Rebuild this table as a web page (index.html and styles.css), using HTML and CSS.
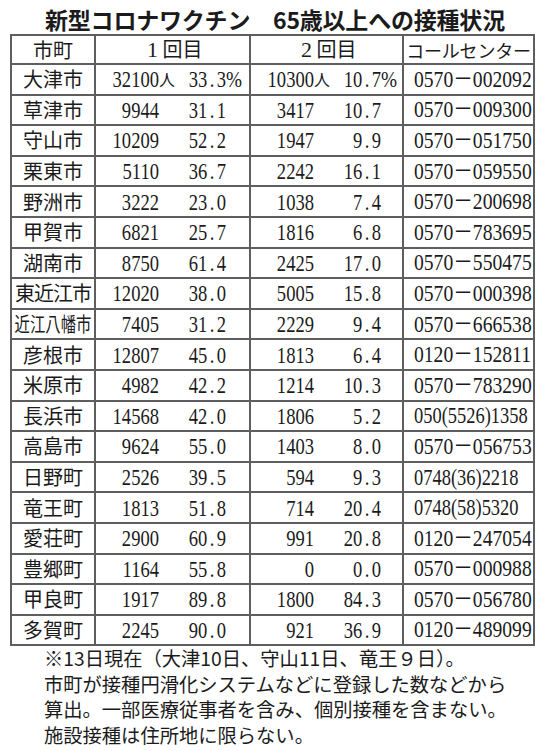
FILE: index.html
```html
<!DOCTYPE html>
<html lang="ja">
<head>
<meta charset="utf-8">
<title>新型コロナワクチン 65歳以上への接種状況</title>
<link rel="stylesheet" href="styles.css">
</head>
<body>
<div class="page">
  <h1 class="title">新型コロナワクチン　65歳以上への接種状況</h1>
  <table class="tbl">
    <colgroup><col class="c1"><col class="c2"><col class="c3"><col class="c4"></colgroup>
    <thead>
      <tr class="head"><th>市町</th><th><span class="fw">1</span>回目</th><th><span class="fw">2</span>回目</th><th class="callh">コールセンター</th></tr>
    </thead>
    <tbody>
      <tr><td class="city">大津市</td><td class="val"><div class="vf"><span class="n">32100</span><span class="u">人</span><span class="p">33<span class="d">.</span>3</span><span class="u2">%</span></div></td><td class="val"><div class="vf"><span class="n">10300</span><span class="u">人</span><span class="p">10<span class="d">.</span>7</span><span class="u2">%</span></div></td><td class="tel"><span class="t">0570－002092</span></td></tr>
      <tr><td class="city">草津市</td><td class="val"><div class="vf"><span class="n">9944</span><span class="u"></span><span class="p">31<span class="d">.</span>1</span><span class="u2"></span></div></td><td class="val"><div class="vf"><span class="n">3417</span><span class="u"></span><span class="p">10<span class="d">.</span>7</span><span class="u2"></span></div></td><td class="tel"><span class="t">0570－009300</span></td></tr>
      <tr><td class="city">守山市</td><td class="val"><div class="vf"><span class="n">10209</span><span class="u"></span><span class="p">52<span class="d">.</span>2</span><span class="u2"></span></div></td><td class="val"><div class="vf"><span class="n">1947</span><span class="u"></span><span class="p">9<span class="d">.</span>9</span><span class="u2"></span></div></td><td class="tel"><span class="t">0570－051750</span></td></tr>
      <tr><td class="city">栗東市</td><td class="val"><div class="vf"><span class="n">5110</span><span class="u"></span><span class="p">36<span class="d">.</span>7</span><span class="u2"></span></div></td><td class="val"><div class="vf"><span class="n">2242</span><span class="u"></span><span class="p">16<span class="d">.</span>1</span><span class="u2"></span></div></td><td class="tel"><span class="t">0570－059550</span></td></tr>
      <tr><td class="city">野洲市</td><td class="val"><div class="vf"><span class="n">3222</span><span class="u"></span><span class="p">23<span class="d">.</span>0</span><span class="u2"></span></div></td><td class="val"><div class="vf"><span class="n">1038</span><span class="u"></span><span class="p">7<span class="d">.</span>4</span><span class="u2"></span></div></td><td class="tel"><span class="t">0570－200698</span></td></tr>
      <tr><td class="city">甲賀市</td><td class="val"><div class="vf"><span class="n">6821</span><span class="u"></span><span class="p">25<span class="d">.</span>7</span><span class="u2"></span></div></td><td class="val"><div class="vf"><span class="n">1816</span><span class="u"></span><span class="p">6<span class="d">.</span>8</span><span class="u2"></span></div></td><td class="tel"><span class="t">0570－783695</span></td></tr>
      <tr><td class="city">湖南市</td><td class="val"><div class="vf"><span class="n">8750</span><span class="u"></span><span class="p">61<span class="d">.</span>4</span><span class="u2"></span></div></td><td class="val"><div class="vf"><span class="n">2425</span><span class="u"></span><span class="p">17<span class="d">.</span>0</span><span class="u2"></span></div></td><td class="tel"><span class="t">0570－550475</span></td></tr>
      <tr><td class="city"><span class="cond4">東近江市</span></td><td class="val"><div class="vf"><span class="n">12020</span><span class="u"></span><span class="p">38<span class="d">.</span>0</span><span class="u2"></span></div></td><td class="val"><div class="vf"><span class="n">5005</span><span class="u"></span><span class="p">15<span class="d">.</span>8</span><span class="u2"></span></div></td><td class="tel"><span class="t">0570－000398</span></td></tr>
      <tr><td class="city"><span class="cond5">近江八幡市</span></td><td class="val"><div class="vf"><span class="n">7405</span><span class="u"></span><span class="p">31<span class="d">.</span>2</span><span class="u2"></span></div></td><td class="val"><div class="vf"><span class="n">2229</span><span class="u"></span><span class="p">9<span class="d">.</span>4</span><span class="u2"></span></div></td><td class="tel"><span class="t">0570－666538</span></td></tr>
      <tr><td class="city">彦根市</td><td class="val"><div class="vf"><span class="n">12807</span><span class="u"></span><span class="p">45<span class="d">.</span>0</span><span class="u2"></span></div></td><td class="val"><div class="vf"><span class="n">1813</span><span class="u"></span><span class="p">6<span class="d">.</span>4</span><span class="u2"></span></div></td><td class="tel"><span class="t">0120－152811</span></td></tr>
      <tr><td class="city">米原市</td><td class="val"><div class="vf"><span class="n">4982</span><span class="u"></span><span class="p">42<span class="d">.</span>2</span><span class="u2"></span></div></td><td class="val"><div class="vf"><span class="n">1214</span><span class="u"></span><span class="p">10<span class="d">.</span>3</span><span class="u2"></span></div></td><td class="tel"><span class="t">0570－783290</span></td></tr>
      <tr><td class="city">長浜市</td><td class="val"><div class="vf"><span class="n">14568</span><span class="u"></span><span class="p">42<span class="d">.</span>0</span><span class="u2"></span></div></td><td class="val"><div class="vf"><span class="n">1806</span><span class="u"></span><span class="p">5<span class="d">.</span>2</span><span class="u2"></span></div></td><td class="tel"><span class="t tp">050(5526)1358</span></td></tr>
      <tr><td class="city">高島市</td><td class="val"><div class="vf"><span class="n">9624</span><span class="u"></span><span class="p">55<span class="d">.</span>0</span><span class="u2"></span></div></td><td class="val"><div class="vf"><span class="n">1403</span><span class="u"></span><span class="p">8<span class="d">.</span>0</span><span class="u2"></span></div></td><td class="tel"><span class="t">0570－056753</span></td></tr>
      <tr><td class="city">日野町</td><td class="val"><div class="vf"><span class="n">2526</span><span class="u"></span><span class="p">39<span class="d">.</span>5</span><span class="u2"></span></div></td><td class="val"><div class="vf"><span class="n">594</span><span class="u"></span><span class="p">9<span class="d">.</span>3</span><span class="u2"></span></div></td><td class="tel"><span class="t tp">0748(36)2218</span></td></tr>
      <tr><td class="city">竜王町</td><td class="val"><div class="vf"><span class="n">1813</span><span class="u"></span><span class="p">51<span class="d">.</span>8</span><span class="u2"></span></div></td><td class="val"><div class="vf"><span class="n">714</span><span class="u"></span><span class="p">20<span class="d">.</span>4</span><span class="u2"></span></div></td><td class="tel"><span class="t tp">0748(58)5320</span></td></tr>
      <tr><td class="city">愛荘町</td><td class="val"><div class="vf"><span class="n">2900</span><span class="u"></span><span class="p">60<span class="d">.</span>9</span><span class="u2"></span></div></td><td class="val"><div class="vf"><span class="n">991</span><span class="u"></span><span class="p">20<span class="d">.</span>8</span><span class="u2"></span></div></td><td class="tel"><span class="t">0120－247054</span></td></tr>
      <tr><td class="city">豊郷町</td><td class="val"><div class="vf"><span class="n">1164</span><span class="u"></span><span class="p">55<span class="d">.</span>8</span><span class="u2"></span></div></td><td class="val"><div class="vf"><span class="n">0</span><span class="u"></span><span class="p">0<span class="d">.</span>0</span><span class="u2"></span></div></td><td class="tel"><span class="t">0570－000988</span></td></tr>
      <tr><td class="city">甲良町</td><td class="val"><div class="vf"><span class="n">1917</span><span class="u"></span><span class="p">89<span class="d">.</span>8</span><span class="u2"></span></div></td><td class="val"><div class="vf"><span class="n">1800</span><span class="u"></span><span class="p">84<span class="d">.</span>3</span><span class="u2"></span></div></td><td class="tel"><span class="t">0570－056780</span></td></tr>
      <tr><td class="city">多賀町</td><td class="val"><div class="vf"><span class="n">2245</span><span class="u"></span><span class="p">90<span class="d">.</span>0</span><span class="u2"></span></div></td><td class="val"><div class="vf"><span class="n">921</span><span class="u"></span><span class="p">36<span class="d">.</span>9</span><span class="u2"></span></div></td><td class="tel"><span class="t">0120－489099</span></td></tr>
    </tbody>
  </table>
  <div class="note">
    <p>※13日現在（大津10日、守山11日、竜王９日）。</p>
    <p>市町が接種円滑化システムなどに登録した数などから</p>
    <p>算出。一部医療従事者を含み、個別接種を含まない。</p>
    <p>施設接種は住所地に限らない。</p>
  </div>
</div>
</body>
</html>
```

FILE: styles.css
```css
html, body {
  margin: 0;
  padding: 0;
  background: #ffffff;
}

body {
  font-family: "Noto Sans CJK JP", "Noto Sans", sans-serif;
  color: #1b1b1b;
}

.page {
  width: 523px;
  padding: 0 12px 0 10px;
}

.title {
  margin: 0;
  height: 34px;
  box-sizing: border-box;
  padding: 5px 0 0 7px;
  font-size: 23px;
  line-height: 28px;
  font-weight: 600;
  text-align: center;
  white-space: nowrap;
  letter-spacing: -0.2px;
}

.tbl {
  border-collapse: collapse;
  table-layout: fixed;
  width: 523px;
}

.c1 { width: 84px; }
.c2 { width: 155px; }
.c3 { width: 153px; }
.c4 { width: 131px; }

.tbl th,
.tbl td {
  border: 2px solid #5e5e5e;
  padding: 0;
  vertical-align: middle;
  white-space: nowrap;
  overflow: hidden;
}

.head th {
  height: 27px;
  font-weight: 400;
  font-size: 20px;
  line-height: 22px;
  text-align: center;
}

.fw {
  display: inline-block;
  width: 20px;
  text-align: center;
  font-family: "Liberation Serif", serif;
  font-size: 22px;
}

.head .callh {
  font-size: 18px;
  letter-spacing: -0.2px;
}

.tbl tbody tr {
  height: 30.6px;
}

.city {
  text-align: center;
  font-size: 20px;
  line-height: 22px;
}

.cond4 {
  display: inline-block;
  letter-spacing: -1px;
}

.cond5 {
  display: inline-block;
  width: 100px;
  margin: 0 -12px;
  transform: scaleX(0.77);
}

.vf {
  display: flex;
  align-items: center;
  height: 26px;
  font-family: "Liberation Serif", serif;
  font-size: 23.5px;
  line-height: 24px;
}

.n {
  width: 63px;
  flex: none;
  text-align: right;
  transform: scaleX(0.79);
  transform-origin: right center;
}

.u {
  width: 16px;
  flex: none;
  font-family: "Noto Sans CJK JP", sans-serif;
  font-size: 16px;
  text-align: right;
}

.p {
  width: 51px;
  flex: none;
  text-align: right;
  transform: scaleX(0.79);
  transform-origin: right center;
}

.d {
  display: inline-block;
  width: 12px;
  text-align: center;
}

.u2 {
  flex: none;
  width: 22px;
  transform: scaleX(0.82);
  transform-origin: left center;
}

.tel {
  padding-left: 10px !important;
  text-align: left;
}

.t {
  display: inline-block;
  font-family: "Liberation Serif", "Noto Sans CJK JP", serif;
  font-size: 23.5px;
  line-height: 24px;
  transform: scaleX(0.835);
  transform-origin: left center;
}

.tp {
  transform: scaleX(0.785);
}

.note {
  margin-top: 0;
  padding-left: 34px;
  font-size: 19.3px;
  line-height: 25.5px;
}

.note p {
  margin: 0;
  height: 25.5px;
  white-space: nowrap;
}
```
